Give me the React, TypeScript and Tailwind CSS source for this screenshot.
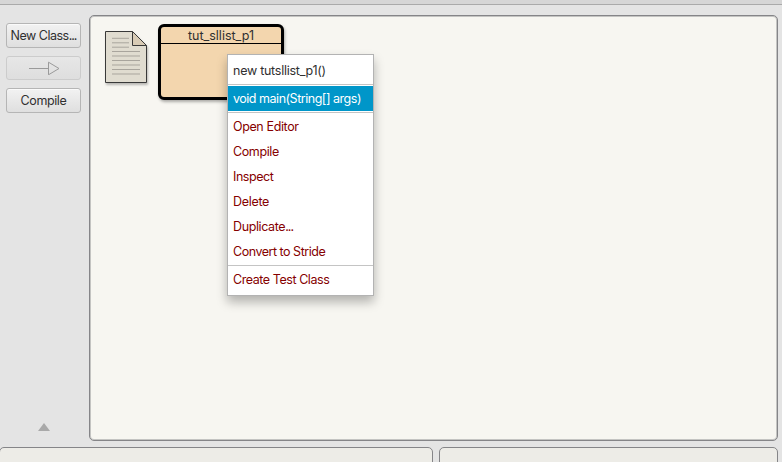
import type { ReactNode } from "react";

const buttonBase =
  "flex w-[75px] shrink-0 items-center justify-center rounded-[3px] border bg-linear-to-b whitespace-nowrap";

function ToolButton({ children, disabled = false }: { children: ReactNode; disabled?: boolean }) {
  return (
    <button
      disabled={disabled}
      className={`${buttonBase} ${
        disabled
          ? "h-6 border-[#cccccc] from-[#e7e7e7] to-[#dedede]"
          : "h-[25px] border-[#b5b5b5] from-[#f2f2f2] to-[#dfdfdf] pt-px shadow-[inset_0_1px_0_#fafafa]"
      }`}
    >
      {children}
    </button>
  );
}

function Separator() {
  return <div className="my-px h-px bg-[#c4c4c4]" />;
}

function MenuItem({ children, tone }: { children: ReactNode; tone: string }) {
  return (
    <div className={`flex h-[25px] items-center pt-px pl-[5px] whitespace-nowrap ${tone}`}>
      <span>{children}</span>
    </div>
  );
}

function ContextMenu() {
  return (
    <div className="absolute top-[38px] left-[137px] w-[147px] border border-[#b3b3b3] bg-white py-[3px] shadow-[0_6px_10px_rgba(0,0,0,0.28)]">
      <MenuItem tone="text-[#303030] tracking-[-0.26px]">new tutsllist_p1()</MenuItem>
      <Separator />
      <MenuItem tone="bg-[#0096c9] text-white tracking-[-0.48px]">void main(String[] args)</MenuItem>
      <Separator />
      <MenuItem tone="text-[#850000] tracking-[-0.38px]">Open Editor</MenuItem>
      <MenuItem tone="text-[#850000] tracking-[-0.4px]">Compile</MenuItem>
      <MenuItem tone="text-[#850000] tracking-[-0.44px]">Inspect</MenuItem>
      <MenuItem tone="text-[#850000] tracking-[-0.3px]">Delete</MenuItem>
      <MenuItem tone="text-[#850000] tracking-[-0.38px]">
        Duplicate<span className="tracking-[-1px]">...</span>
      </MenuItem>
      <MenuItem tone="text-[#850000] tracking-[-0.48px]">Convert to Stride</MenuItem>
      <Separator />
      <MenuItem tone="text-[#850000] tracking-[-0.44px]">Create Test Class</MenuItem>
    </div>
  );
}

function ReadmeIcon() {
  return (
    <svg width="44" height="54" viewBox="0 0 44 54" className="mt-[15px] ml-[15px] shrink-0 overflow-visible drop-shadow-[1px_2px_1px_rgba(0,0,0,0.25)]">
      <path d="M.5.5H27.5L41.5 14.5V51.5H.5Z" fill="#e0dcd0" stroke="#393939" />
      <path d="M27.5.5V14.5H41.5Z" fill="#d8cbb5" stroke="#393939" />
      <path
        d="M7 7.3H24M7 11.8H24M7 16.2H24M7 20.5H35M7 25H35M7 29.5H35M7 34H35M7 38.5H35M7 43H35"
        stroke="#a9a59d"
      />
    </svg>
  );
}

export default function App() {
  return (
    <div className="flex h-[462px] w-[782px] flex-col overflow-hidden bg-[#e4e4e4] font-['Inter','Liberation_Sans',sans-serif] text-[12.5px] leading-4 text-[#303030]">
      <div className="h-[5px] shrink-0 border-b border-[#aaaaaa] bg-[#d6d6d6]" />
      <div className="flex h-[442px] shrink-0">
        <aside className="flex w-[89px] flex-col items-start pt-[18px] pl-[6px]">
          <ToolButton>
            <span className="tracking-[-0.5px]">
              New Class<span className="tracking-[-1px]">...</span>
            </span>
          </ToolButton>
          <div className="h-2" />
          <ToolButton disabled>
            <svg width="32" height="14" viewBox="0 0 32 14" fill="none" stroke="#9a9a9a">
              <path d="M1 7.5H20.5M20.5 1.2V13.8L31 7.5Z" />
            </svg>
          </ToolButton>
          <div className="h-2" />
          <ToolButton>
            <span className="tracking-[-0.4px]">Compile</span>
          </ToolButton>
          <svg width="12" height="8" viewBox="0 0 12 8" className="mt-auto mb-4 ml-8">
            <path d="M6 0L12 8H0Z" fill="#a9a9a9" />
          </svg>
        </aside>
        <main className="relative mt-[10px] flex h-[426px] w-[689px] items-start rounded-[5px] border border-[#858588] bg-[#f7f6f1] shadow-[inset_0_0_0_1px_#c4c4c2]">
          <ReadmeIcon />
          <div className="mt-2 ml-[9px] h-[76px] w-[126px] rounded-[6px] border-[3px] border-black bg-[#f3d6ae] shadow-[1px_2px_3px_rgba(0,0,0,0.3)]">
            <div className="flex h-[17px] items-center justify-center border-b border-black pt-px">
              <span>tut_sllist_p1</span>
            </div>
          </div>
          <ContextMenu />
        </main>
      </div>
      <div className="flex h-[15px] shrink-0 gap-[6px]">
        <div className="-ml-px h-6 w-[434px] shrink-0 rounded-[5px] border border-[#858588] bg-[#edece7]" />
        <div className="h-6 w-[339px] shrink-0 rounded-[5px] border border-[#858588] bg-[#edece7]" />
      </div>
    </div>
  );
}
